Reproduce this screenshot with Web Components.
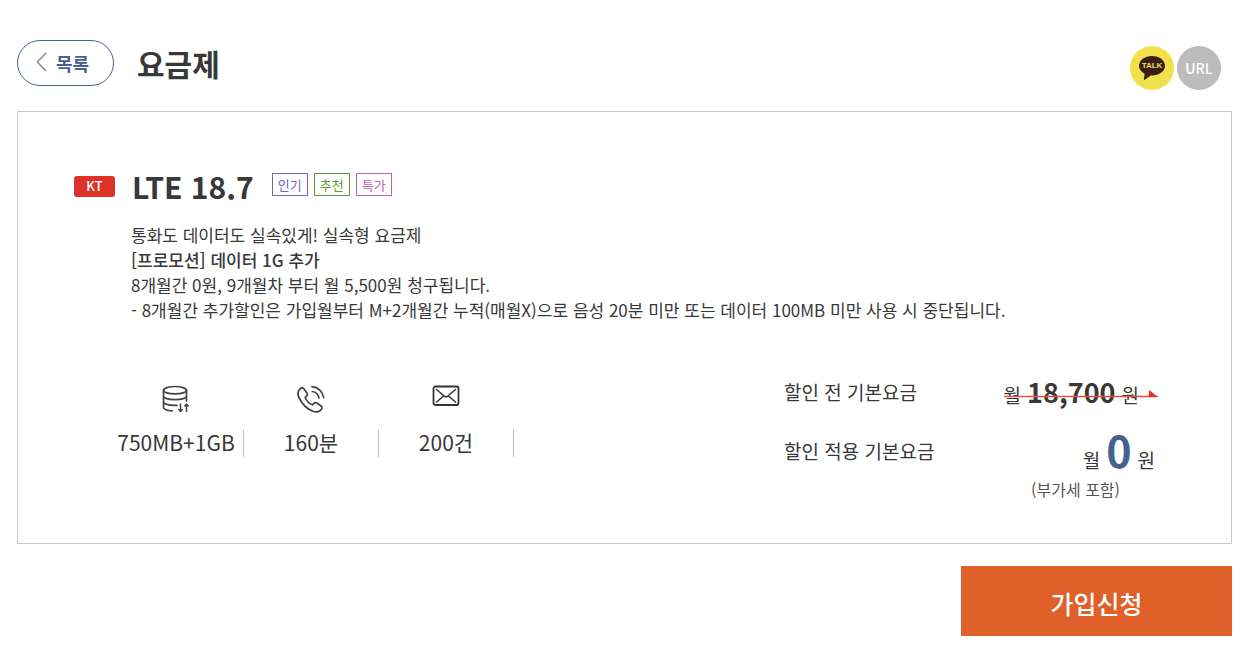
<!DOCTYPE html>
<html lang="ko">
<head>
<meta charset="utf-8">
<meta name="viewport" content="width=device-width, initial-scale=1">
<title>요금제</title>
<style>
body{margin:0;background:#fff;color:#383838;font-family:"Noto Sans CJK KR","Noto Sans",sans-serif;font-size:17px}
</style>
</head>
<body>
<plan-page></plan-page>
<script>
function define(name, html){
  const t=document.createElement('template');
  t.innerHTML=html;
  customElements.define(name, class extends HTMLElement{
    constructor(){
      super();
      this.attachShadow({mode:'open'}).append(t.content.cloneNode(true));
    }
  });
}

define('back-link', `
<style>
:host{display:block}
a{box-sizing:border-box;display:flex;align-items:center;gap:9px;width:97px;height:46px;padding:0 18px;border:1px solid #46608f;border-radius:23px;color:#46608f;font-size:18px;font-weight:700;line-height:26px;text-decoration:none;white-space:nowrap}
svg{flex:none;margin-bottom:3px}
</style>
<a href="#list"><svg width="11" height="20" viewBox="0 0 11 20" fill="none" stroke="#8290a8" stroke-width="1.6"><path d="M10 1 1.3 10 10 19"/></svg><slot></slot></a>`);

define('share-buttons', `
<style>
:host{display:flex;gap:3px}
button{display:flex;align-items:center;justify-content:center;width:44px;height:44px;padding:0;border:0;border-radius:50%;font-family:inherit;cursor:pointer}
.talk{background:#f0e04b}
.url{background:#bcbcbc;color:#fff;font-size:14px;font-weight:500;line-height:20px}
.bubble{display:grid;width:26px;height:24px}
.bubble svg{grid-area:1/1}
.bubble span{grid-area:1/1;align-self:start;z-index:1;text-align:center;color:#f0e04b;font:700 8px/20px "Liberation Sans",Arial,sans-serif}
</style>
<button class="talk" type="button" aria-label="카카오톡 공유"><span class="bubble"><svg width="26" height="24" viewBox="0 0 26 24"><path fill="#3a1d1c" d="M13 0C5.800 0 0 4.300 0 9.700c0 3.300 2.200 6.200 5.600 8L4.900 23.300c0 .5.4.8.9.5l6.300-4.500.9.100c7.200 0 13-4.300 13-9.700S20.200 0 13 0Z"/></svg><span>TALK</span></span></button>
<button class="url" type="button">URL</button>`);

define('page-header', `
<style>
:host{display:flex;align-items:flex-start;gap:23px;height:46px}
h1{margin:0;font-size:30px;line-height:46px;font-weight:700}
share-buttons{margin:6px 11px 0 auto}
</style>
<back-link>목록</back-link><h1><slot></slot></h1><share-buttons></share-buttons>`);

define('carrier-badge', `
<style>:host{display:block;width:41px;height:21px;border-radius:3px;background:#dc3228;color:#fff;font-size:13px;font-weight:500;line-height:20px;text-align:center}</style><slot></slot>`);

define('plan-tag', `
<style>:host{display:block;box-sizing:border-box;width:36px;height:23px;border:1px solid;font-size:13px;line-height:21px;text-align:center;white-space:nowrap}</style><slot></slot>`);

define('usage-item', `
<style>
:host{display:flex;flex-direction:column;align-items:center;gap:15px;width:135px}
.icon{display:flex;height:30px;padding-right:2px}
.value{box-sizing:border-box;width:100%;border-right:1px solid #bbb;font-size:21px;line-height:25px;height:27px;text-align:center;white-space:nowrap}
</style>
<div class="icon"><slot name="icon"></slot></div><div class="value"><slot></slot></div>`);

define('usage-list', `
<style>:host{display:flex}</style>
<usage-item><svg slot="icon" width="28" height="30" viewBox="0 0 28 30" fill="none" stroke="#444" stroke-width="1.7" stroke-linecap="round" stroke-linejoin="round"><ellipse cx="13" cy="5.200" rx="11.500" ry="3.700"/><path d="M1.500 5.200v17c0 2 3.800 3.300 8.700 3.600M24.500 5.200V16M1.500 11c0 2.200 5 3.600 11.500 3.600S24.500 13.200 24.500 11M1.500 16.800c0 2.200 5 3.600 11.500 3.600h2"/><path stroke-width="1.500" d="M18.500 19v7.500m-1.700-2 1.700 2 1.700-2M24.500 26.500V19m-1.700 2 1.700-2 1.700 2"/></svg>750MB+1GB</usage-item>
<usage-item><svg slot="icon" width="30" height="30" viewBox="0 0 30 30" fill="none" stroke="#444" stroke-width="1.700" stroke-linecap="round" stroke-linejoin="round"><path d="M7.600 3.500c-1-1-2.200-.9-3.200 0C1.500 5.800 1.300 9.200 3.200 13c3 6.300 7.500 10.500 13 13 3.700 1.600 7.200 1 9.200-1.800.8-1.200.7-2.300-.3-3.200l-4.300-3c-1-.6-2-.5-2.900.3l-1.500 1.500c-3.300-1.300-5.800-3.900-7.300-7.300l1.600-1.600c.8-.8.9-1.800.2-2.800Z"/><path d="M16 1.700c6.300.5 10.700 5 11.700 11M16.300 6.500c3.800.5 6 3 6.700 6.500"/></svg>160분</usage-item>
<usage-item><svg slot="icon" width="28" height="30" viewBox="0 0 28 30" fill="none" stroke="#333" stroke-width="1.800" stroke-linecap="round" stroke-linejoin="round"><rect x="1.500" y="1.500" width="25" height="18.500" rx="2"/><path stroke-width="1.500" d="m4.500 4.500 8 6.800c1 .8 2 .8 3 0l8-6.800M4.500 17l6.500-5.500M23.500 17 17 11.500"/></svg>200건</usage-item>`);

define('price-amount', `
<style>
:host{display:flex;align-items:baseline;justify-content:flex-end;gap:6px;font-size:19px;line-height:30px}
b{font-size:27px;font-weight:700}
:host([final]) b{color:#46608f;font-size:43px;line-height:50px}
:host([before]){position:relative;padding-right:18px}
svg{display:none;position:absolute;right:-1px;bottom:12px;width:calc(100% + 1px);height:8px}
:host([before]) svg{display:block}
</style>
<span>월</span><b><slot></slot></b><span>원</span><svg><path d="M0 6.500H200" stroke="#e2553c" stroke-width="1.400"/><svg x="100%" overflow="visible"><path d="M-9 0-1 7H-10Z" fill="#e0321c"/></svg></svg>`);

define('price-summary', `
<style>
:host{display:block;width:373px}
dl{margin:0;display:grid;grid-template-columns:1fr auto;font-size:19px;line-height:30px}
dt{white-space:nowrap}
dd{margin:0;justify-self:end}
.final{padding-top:26px}
dd.final{padding-top:14px;padding-right:2px}
p{margin:2px 0 0;padding-right:37px;text-align:right;font-size:16px;line-height:24px;color:#555}
</style>
<dl><dt>할인 전 기본요금</dt><dd><price-amount before>18,700</price-amount></dd>
<dt class="final">할인 적용 기본요금</dt><dd class="final"><price-amount final>0</price-amount></dd></dl>
<p>(부가세 포함)</p>`);

define('plan-card', `
<style>
:host{display:block;border:1px solid #c8c8c8;padding:54px 74px 42px 56px}
.head{display:flex;align-items:center;gap:17px}
h2{margin:0;font-size:30px;line-height:40px;font-weight:700;white-space:nowrap}
.tags{display:flex;gap:6px;padding:0 0 4px 1px}
.text{padding:16px 0 0 57px;line-height:25px}
.text p{margin:0}
strong{font-weight:500}
.detail{display:flex;justify-content:space-between;align-items:flex-start;gap:24px;padding-top:55px}
usage-list{margin:8px 0 0 35px}
</style>
<div class="head"><carrier-badge>KT</carrier-badge><h2>LTE 18.7</h2>
<div class="tags"><plan-tag style="color:#7464c8">인기</plan-tag><plan-tag style="color:#5f9a38">추천</plan-tag><plan-tag style="color:#bd62b4">특가</plan-tag></div></div>
<div class="text"><p>통화도 데이터도 실속있게! 실속형 요금제</p><p><strong>[프로모션] 데이터 1G 추가</strong></p><p>8개월간 0원, 9개월차 부터 월 5,500원 청구됩니다.</p><p>- 8개월간 추가할인은 가입월부터 M+2개월간 누적(매월X)으로 음성 20분 미만 또는 데이터 100MB 미만 사용 시 중단됩니다.</p></div>
<div class="detail"><usage-list></usage-list><price-summary></price-summary></div>`);

define('apply-button', `
<style>
:host{display:block}
button{display:block;width:271px;height:70px;padding:4px 0 0;border:0;background:#df6029;color:#fff;font-family:inherit;font-size:25px;line-height:36px;font-weight:500;cursor:pointer}
</style><button type="button"><slot></slot></button>`);

define('plan-page', `
<style>
:host{display:block;padding:40px 17px 35px}
plan-card{margin:25px 0 22px}
apply-button{display:flex;justify-content:flex-end}
</style>
<page-header>요금제</page-header>
<main><plan-card></plan-card><apply-button>가입신청</apply-button></main>`);
</script>
</body>
</html>
